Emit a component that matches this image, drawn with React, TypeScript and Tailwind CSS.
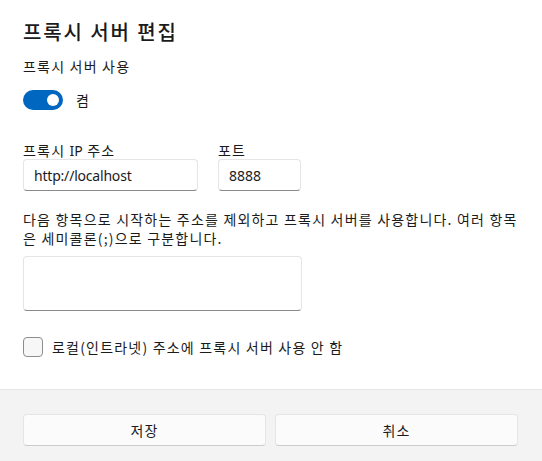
import React from "react";

export default function App() {
  return (
    <div className="w-[542px] h-[461px] bg-white flex flex-col text-[#1b1b1b] overflow-hidden font-['Noto_Sans_CJK_KR',sans-serif] tracking-[1.2px]">
      <div className="flex-1 pt-[18px] pl-[23px] pr-[24px] flex flex-col">
        <h1 className="text-[20px] leading-[28px] font-medium tracking-[1.9px]">프록시 서버 편집</h1>
        <div className="mt-[10px] text-[14px] leading-[20px]">프록시 서버 사용</div>
        <div className="mt-[14px] flex items-center gap-[13px] h-[20px]">
          <div className="relative w-[40px] h-[20px] rounded-full bg-[#0067c0]">
            <div className="absolute right-[4px] top-[4px] w-[12px] h-[12px] rounded-full bg-white" />
          </div>
          <span className="text-[14px] leading-[20px]">켬</span>
        </div>
        <div className="mt-[32px] flex gap-[20px]">
          <div className="flex flex-col">
            <label className="text-[14px] leading-[17px]">
              프록시 <span className="font-['Noto_Sans',sans-serif] tracking-normal">IP</span> 주소
            </label>
            <div className="w-[175px] h-[32px] rounded-[4px] border border-[#e5e5e5] border-b-[#8a8a8a] bg-white flex items-center pl-[10px] text-[14px] font-['Noto_Sans',sans-serif] tracking-[-0.2px]">
              http://localhost
            </div>
          </div>
          <div className="flex flex-col">
            <label className="text-[14px] leading-[17px]">포트</label>
            <div className="w-[83px] h-[32px] rounded-[4px] border border-[#e5e5e5] border-b-[#8a8a8a] bg-white flex items-center pl-[10px] text-[14px] font-['Noto_Sans',sans-serif] tracking-normal">
              8888
            </div>
          </div>
        </div>
        <p className="mt-[19px] text-[14px] leading-[19px]">
          다음 항목으로 시작하는 주소를 제외하고 프록시 서버를 사용합니다. 여러 항목은 세미콜론(;)으로 구분합니다.
        </p>
        <div className="mt-[8px] w-[279px] h-[55px] rounded-[4px] border border-[#e5e5e5] border-b-[#8a8a8a] bg-white" />
        <div className="mt-[26px] flex items-center gap-[9px]">
          <div className="w-[20px] h-[20px] rounded-[4px] border border-[#8d8d8d] bg-[#f7f7f7]" />
          <span className="text-[14px] leading-[20px]">로컬(인트라넷) 주소에 프록시 서버 사용 안 함</span>
        </div>
      </div>
      <div className="h-[72px] border-t border-[#e5e5e5] bg-[#f3f3f3] pt-[24px] pl-[23px] pr-[24px] flex gap-[9px] items-start">
        <button className="flex-1 h-[32px] rounded-[4px] border border-[#e5e5e5] border-b-[#cccccc] bg-[#fbfbfb] text-[14px]">
          저장
        </button>
        <button className="flex-1 h-[32px] rounded-[4px] border border-[#e5e5e5] border-b-[#cccccc] bg-[#fbfbfb] text-[14px]">
          취소
        </button>
      </div>
    </div>
  );
}
